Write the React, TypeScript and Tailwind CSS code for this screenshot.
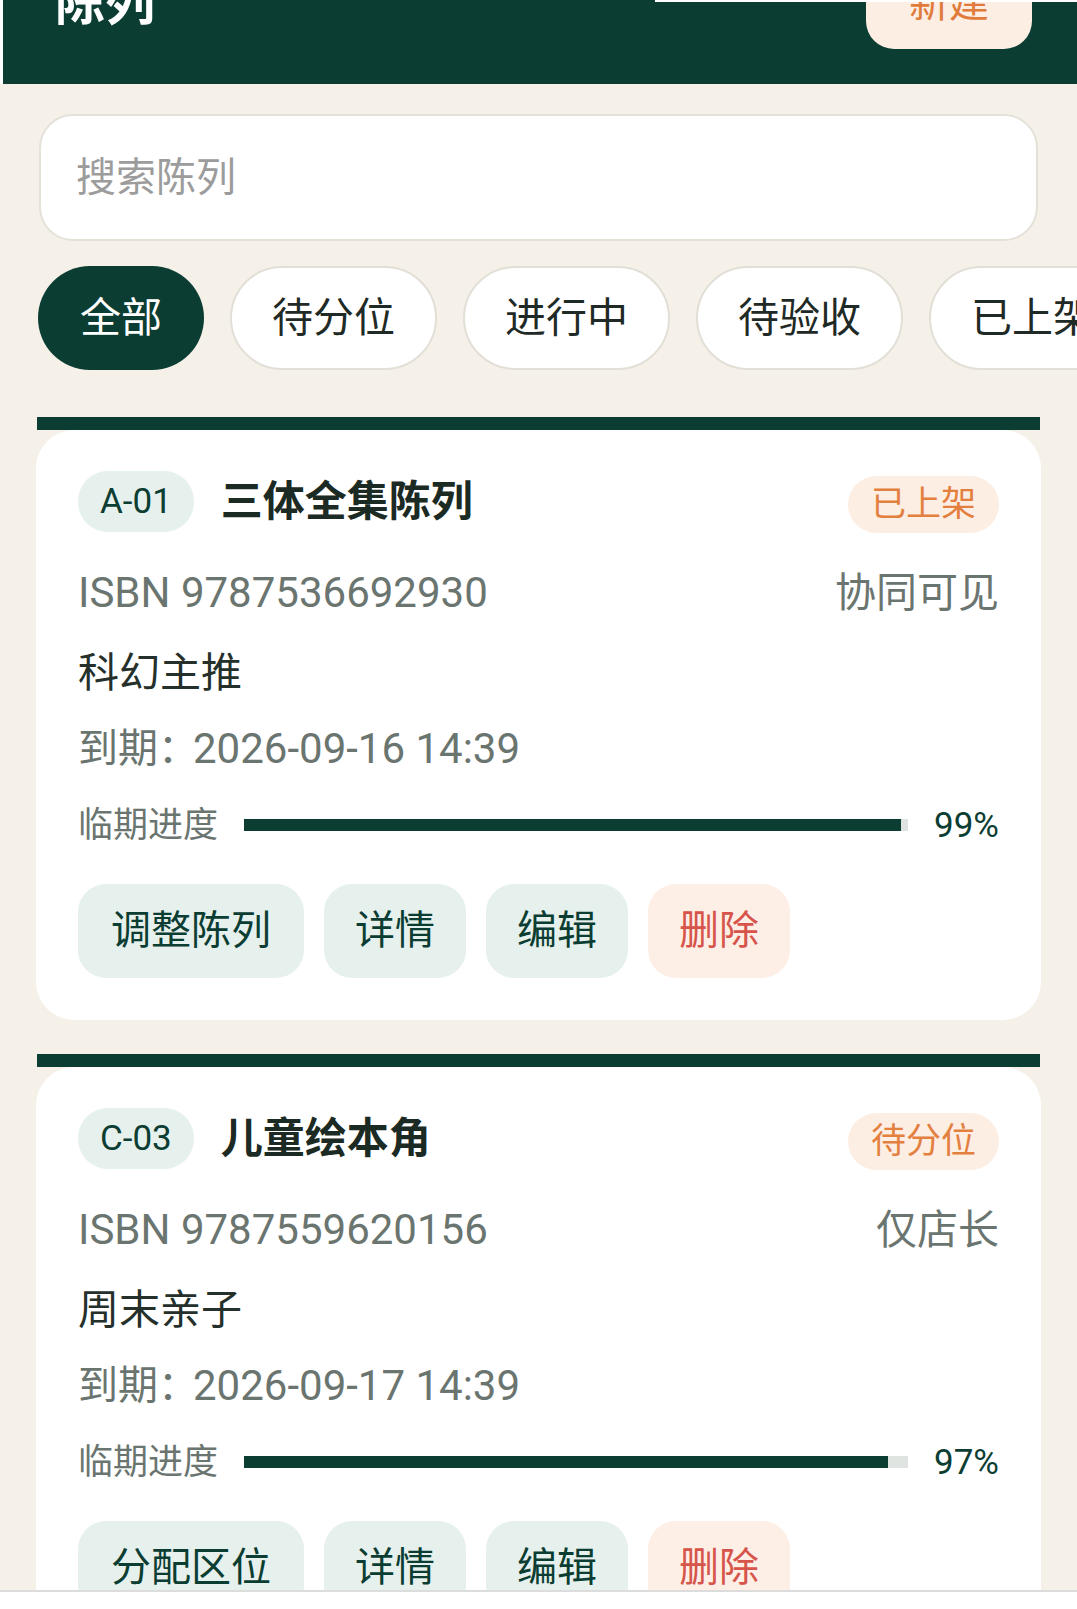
import React from "react";

const font = { fontFamily: 'Roboto, "Noto Sans CJK SC", sans-serif' };

type Card = {
  code: string;
  title: string;
  status: string;
  isbn: string;
  vis: string;
  tag: string;
  date: string;
  pct: number;
  action: string;
};

const cards: Card[] = [
  {
    code: "A-01",
    title: "三体全集陈列",
    status: "已上架",
    isbn: "ISBN 9787536692930",
    vis: "协同可见",
    tag: "科幻主推",
    date: "2026-09-16 14:39",
    pct: 99,
    action: "调整陈列",
  },
  {
    code: "C-03",
    title: "儿童绘本角",
    status: "待分位",
    isbn: "ISBN 9787559620156",
    vis: "仅店长",
    tag: "周末亲子",
    date: "2026-09-17 14:39",
    pct: 97,
    action: "分配区位",
  },
];

function CardView({ c }: { c: Card }) {
  return (
    <div className="mx-[37px]">
      <div className="h-[13px] bg-[#0b3d32]" />
      <div className="bg-white rounded-[38px] pt-[41px] pb-[42px] pl-[42px] pr-[42px] -mx-[1px]">
        <div className="flex items-center h-[61px]">
          <div className="h-[61px] px-[22px] rounded-[30px] bg-[#e6f0ec] text-[#0b3d32] text-[35px] flex items-center leading-none">
            {c.code}
          </div>
          <div className="ml-[27px] text-[42px] font-bold text-[#1c2a24] leading-none">{c.title}</div>
          <div className="ml-auto mt-[6px] h-[57px] px-[23px] rounded-[29px] bg-[#fdeee4] text-[#e3803f] text-[35px] flex items-center leading-none">
            {c.status}
          </div>
        </div>
        <div className="mt-[36px] h-[50px] flex items-center justify-between text-[#6b7570] leading-none">
          <span className="text-[42px]">{c.isbn}</span>
          <span className="text-[41px]">{c.vis}</span>
        </div>
        <div className="mt-[30px] h-[50px] flex items-center text-[41px] text-[#25302b] leading-none">{c.tag}</div>
        <div className="mt-[26px] h-[50px] flex items-center text-[#6b7570] leading-none">
          <span className="text-[40px] mr-[-5px]">到期：</span>
          <span className="text-[42px]">{c.date}</span>
        </div>
        <div className="mt-[26px] h-[50px] flex items-center leading-none">
          <span className="text-[35px] text-[#6b7570]">临期进度</span>
          <div className="flex-1 mx-[26px] h-[12px] bg-[#dfe4e1]">
            <div className="h-full bg-[#0b3d32]" style={{ width: `${c.pct}%` }} />
          </div>
          <span className="text-[35px] text-[#0b3d32]">{c.pct}%</span>
        </div>
        <div className="mt-[34px] flex gap-[20px]">
          <div className="h-[94px] px-[33px] rounded-[28px] bg-[#e6f0ec] text-[#0b3d32] text-[40px] flex items-center leading-none">
            {c.action}
          </div>
          <div className="h-[94px] px-[31px] rounded-[28px] bg-[#e6f0ec] text-[#0b3d32] text-[40px] flex items-center leading-none">
            详情
          </div>
          <div className="h-[94px] px-[31px] rounded-[28px] bg-[#e6f0ec] text-[#0b3d32] text-[40px] flex items-center leading-none">
            编辑
          </div>
          <div className="h-[94px] px-[31px] rounded-[28px] bg-[#fdeee6] text-[#d6544a] text-[40px] flex items-center leading-none">
            删除
          </div>
        </div>
      </div>
    </div>
  );
}

export default function App() {
  const chips = ["全部", "待分位", "进行中", "待验收", "已上架", "已完成"];
  return (
    <div className="relative w-[1077px] h-[1609px] overflow-hidden bg-[#f5f1e9]" style={font}>
      <div className="bg-white">
        <div className="ml-[3px] h-[84px] bg-[#0b3d32] flex items-start justify-between pl-[52px] pr-[45px]">
          <div className="-mt-[22px] text-[50px] font-bold text-white leading-none">陈列</div>
          <div className="-mt-[41px] h-[90px] px-[43px] rounded-[28px] bg-[#fdeee4] text-[#e07b3c] text-[40px] flex items-center leading-none">
            新建
          </div>
        </div>
      </div>
      <div className="absolute top-0 left-[655px] right-0 h-[2px] bg-white" />

      <div className="mt-[30px] mx-[39px] h-[127px] rounded-[34px] border-2 border-[#e4e1d9] bg-white flex items-center pl-[35px]">
        <span className="text-[40px] text-[#9c9c9c] leading-none">搜索陈列</span>
      </div>

      <div className="mt-[25px] pl-[38px] flex gap-[26px] whitespace-nowrap">
        {chips.map((t, i) => (
          <div
            key={t}
            className={
              i === 0
                ? "shrink-0 h-[104px] px-[42px] rounded-full bg-[#0b3d32] text-white text-[41px] flex items-center leading-none"
                : "shrink-0 h-[104px] px-[40px] rounded-full bg-white border-2 border-[#e2dfd7] text-[#1f2a26] text-[41px] flex items-center leading-none"
            }
          >
            {t}
          </div>
        ))}
      </div>

      <div className="mt-[47px] flex flex-col gap-[34px]">
        {cards.map((c) => (
          <CardView key={c.code} c={c} />
        ))}
      </div>

      <div className="absolute left-0 right-0 bottom-0 h-[19px] bg-white border-t-2 border-[#dcdcdc]" />
    </div>
  );
}
